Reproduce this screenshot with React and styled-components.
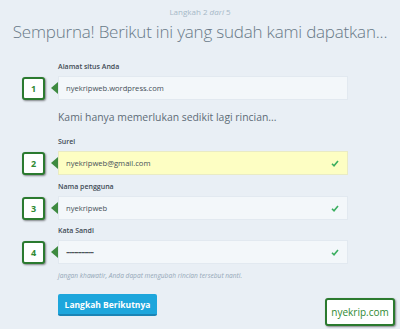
import styled, { createGlobalStyle } from "styled-components";

const Global = createGlobalStyle`
  html, body { margin: 0; padding: 0; background: #e9eff5; }
  body { font-family: "Open Sans", "Noto Sans", sans-serif; width: 400px; height: 329px; overflow: hidden; }
`

const Page = styled.div`
  position: relative;
  width: 400px;
  height: 329px;
  padding-top: 6px;
  box-sizing: border-box;
`

const Step = styled.div`
  text-align: center;
  font-size: 8px;
  line-height: 12px;
  color: #a6b8c7;
  em { font-style: italic; }
`

const Title = styled.h1`
  margin: 1px 0 0;
  text-align: center;
  white-space: nowrap;
  font-weight: 300;
  font-size: 17px;
  letter-spacing: -0.2px;
  line-height: 26px;
  color: #687987;
`

const Form = styled.div`
  margin-top: 17px;
  display: flex;
  flex-direction: column;
`

const Label = styled.div`
  margin-left: 58px;
  font-size: 7px;
  font-weight: 600;
  line-height: 10px;
  color: #3e4a54;
  margin-bottom: 4px;
  margin-top: ${p => p.$top || 0}px;
`

const Row = styled.div`
  display: flex;
  align-items: center;
  height: 24px;
`

const Badge = styled.div`
  margin-left: 22px;
  width: 23px;
  height: 23px;
  box-sizing: border-box;
  border: 2.5px solid #2b7a2f;
  border-radius: 3px;
  background: #fff;
  box-shadow: 1px 1px 2px rgba(0,0,0,0.45);
  display: flex;
  align-items: center;
  justify-content: center;
  font-size: 9px;
  font-weight: 700;
  color: #2f8a33;
`

const Arrow = styled.div`
  margin-left: 6px;
  width: 0;
  height: 0;
  border-top: 6px solid transparent;
  border-bottom: 6px solid transparent;
  border-right: 7px solid #3e8a40;
`

const Input = styled.div`
  width: 290px;
  height: 24px;
  box-sizing: border-box;
  display: flex;
  align-items: center;
  justify-content: space-between;
  padding: 0 8px 0 7px;
  background: ${p => p.$yellow ? "#fdfec3" : "#f3f7fa"};
  border: 1px solid ${p => p.$yellow ? "#e9ebc4" : "#e2e9f0"};
  font-size: 7.6px;
  color: #454f58;
`

const Dots = styled.span`
  font-size: 6px;
  letter-spacing: -0.9px;
  color: #2a3138;
`

const Note = styled.div`
  margin: 10px 0 0 58px;
  font-size: 10.4px;
  line-height: 14px;
  color: #5e6c77;
`

const Hint = styled.div`
  margin: 7px 0 0 58px;
  font-size: 6.6px;
  font-style: italic;
  color: #94a7b7;
`

const Button = styled.button`
  margin: 14px 0 0 58px;
  align-self: flex-start;
  width: 99px;
  height: 22px;
  border: none;
  border-bottom: 2px solid #1a84b5;
  border-radius: 2px;
  background: #1da6dc;
  color: #fff;
  font-family: "Open Sans", sans-serif;
  font-weight: 700;
  font-size: 8.5px;
  padding: 0;
`

const Watermark = styled.div`
  position: absolute;
  left: 325px;
  top: 298px;
  width: 70px;
  height: 28px;
  box-sizing: border-box;
  border: 2.5px solid #2b7a2f;
  border-radius: 3px;
  background: #fff;
  box-shadow: 1px 1px 2px rgba(0,0,0,0.45);
  display: flex;
  align-items: center;
  justify-content: center;
  font-size: 10px;
  color: #2f8a33;
`

const Check = () => (
  <svg width="8" height="7" viewBox="0 0 8 7">
    <path d="M1 3.8 L3 5.8 L7 1" fill="none" stroke="#3aae5f" strokeWidth="1.6" />
  </svg>
)

function Field({ n, label, value, yellow, check, top }) {
  return (
    <>
      <Label $top={top}>{label}</Label>
      <Row>
        <Badge>{n}</Badge>
        <Arrow />
        <Input $yellow={yellow}>
          <span>{value}</span>
          {check && <Check />}
        </Input>
      </Row>
    </>
  )
}

export default function App() {
  return (
    <Page>
      <Global />
      <Step>Langkah 2 <em>dari</em> 5</Step>
      <Title>Sempurna! Berikut ini yang sudah kami dapatkan...</Title>
      <Form>
        <Field n="1" label="Alamat situs Anda" value="nyekripweb.wordpress.com" />
        <Note>Kami hanya memerlukan sedikit lagi rincian...</Note>
        <Field n="2" top={13} label="Surel" value="nyekripweb@gmail.com" yellow check />
        <Field n="3" top={7} label="Nama pengguna" value="nyekripweb" check />
        <Field n="4" top={6} label="Kata Sandi" value={<Dots>••••••••••••••••••••</Dots>} check />
        <Hint>jangan khawatir, Anda dapat mengubah rincian tersebut nanti.</Hint>
        <Button>Langkah Berikutnya</Button>
      </Form>
      <Watermark>nyekrip.com</Watermark>
    </Page>
  )
}
